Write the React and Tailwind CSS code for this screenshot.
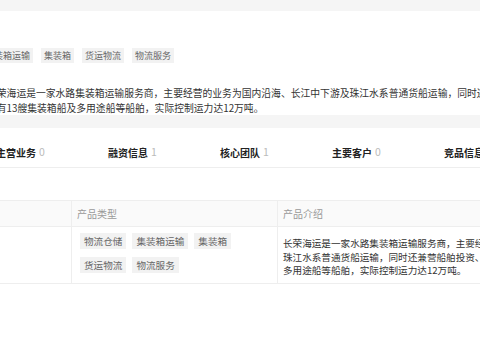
import React from 'react';

const topTags = ['集装箱运输', '集装箱', '货运物流', '物流服务'];
const tabs = [
  { label: '主营业务', count: 0 },
  { label: '融资信息', count: 1 },
  { label: '核心团队', count: 1 },
  { label: '主要客户', count: 0 },
  { label: '竞品信息', count: 1 },
];
const rowTags = [['物流仓储', '集装箱运输', '集装箱'], ['货运物流', '物流服务']];

const App = () => {
  return (
    <div className="w-[480px] h-[360px] overflow-hidden bg-white text-[#333] font-['Noto_Sans_CJK_SC','Noto_Sans',sans-serif]">
      <div className="h-[11px] bg-[#f5f5f5]" />

      {/* 公司简介 */}
      <section className="h-[104px] pt-[37px]">
        <div className="flex gap-[8px] -ml-[18px] whitespace-nowrap">
          {topTags.map((t) => (
            <span key={t} className="h-[15px] px-[3px] bg-[#f2f2f2] text-[#666] text-[9px] leading-[15px]">{t}</span>
          ))}
        </div>
        <div className="mt-[23px] -ml-[13px] text-[9.8px] leading-[15px] whitespace-nowrap">
          <p>长荣海运是一家水路集装箱运输服务商，主要经营的业务为国内沿海、长江中下游及珠江水系普通货船运输，同时还兼营船舶投资、船舶管理等业务，</p>
          <p>拥有13艘集装箱船及多用途船等船舶，实际控制运力达12万吨。</p>
        </div>
      </section>

      <div className="h-[13px] bg-[#f5f5f5]" />

      {/* 标签页 */}
      <section>
        <div className="flex h-[40px] pt-[16px] border-b border-[#eeeeee] -ml-[4px] whitespace-nowrap">
          {tabs.map((t) => (
            <div key={t.label} className="w-[112px] shrink-0 flex items-center h-[16px] gap-[3px]">
              <span className="text-[10px] font-bold text-[#222]">{t.label}</span>
              <span className="text-[10.5px] text-[#bbbbbb]">{t.count}</span>
            </div>
          ))}
        </div>

        <div className="mt-[32px] border-t border-b border-[#eeeeee] flex whitespace-nowrap">
          <div className="w-[72px] shrink-0 border-r border-[#eeeeee]">
            <div className="h-[26px] bg-[#fafafa] border-b border-[#eeeeee]" />
          </div>
          <div className="w-[206px] shrink-0 border-r border-[#eeeeee]">
            <div className="h-[26px] bg-[#fafafa] border-b border-[#eeeeee] px-[5px] text-[10px] leading-[26px] text-[#999]">产品类型</div>
            <div className="h-[56px] pt-[6px] px-[8px] flex flex-col gap-[8px]">
              {rowTags.map((row, i) => (
                <div key={i} className="flex gap-[6px]">
                  {row.map((t) => (
                    <span key={t} className="h-[16px] px-[4px] bg-[#f2f2f2] text-[#666] text-[9.6px] leading-[16px]">{t}</span>
                  ))}
                </div>
              ))}
            </div>
          </div>
          <div className="flex-1">
            <div className="h-[26px] bg-[#fafafa] border-b border-[#eeeeee] px-[5px] text-[10px] leading-[26px] text-[#999]">产品介绍</div>
            <div className="h-[56px] pt-[10px] px-[5px] text-[9.6px] leading-[13.5px] text-[#333]">
              <p>长荣海运是一家水路集装箱运输服务商，主要经营的业务为国内沿海、长江中下游及</p>
              <p>珠江水系普通货船运输，同时还兼营船舶投资、船舶管理等业务，拥有13艘集装箱船及</p>
              <p>多用途船等船舶，实际控制运力达12万吨。</p>
            </div>
          </div>
        </div>
      </section>
    </div>
  );
};

export default App;
